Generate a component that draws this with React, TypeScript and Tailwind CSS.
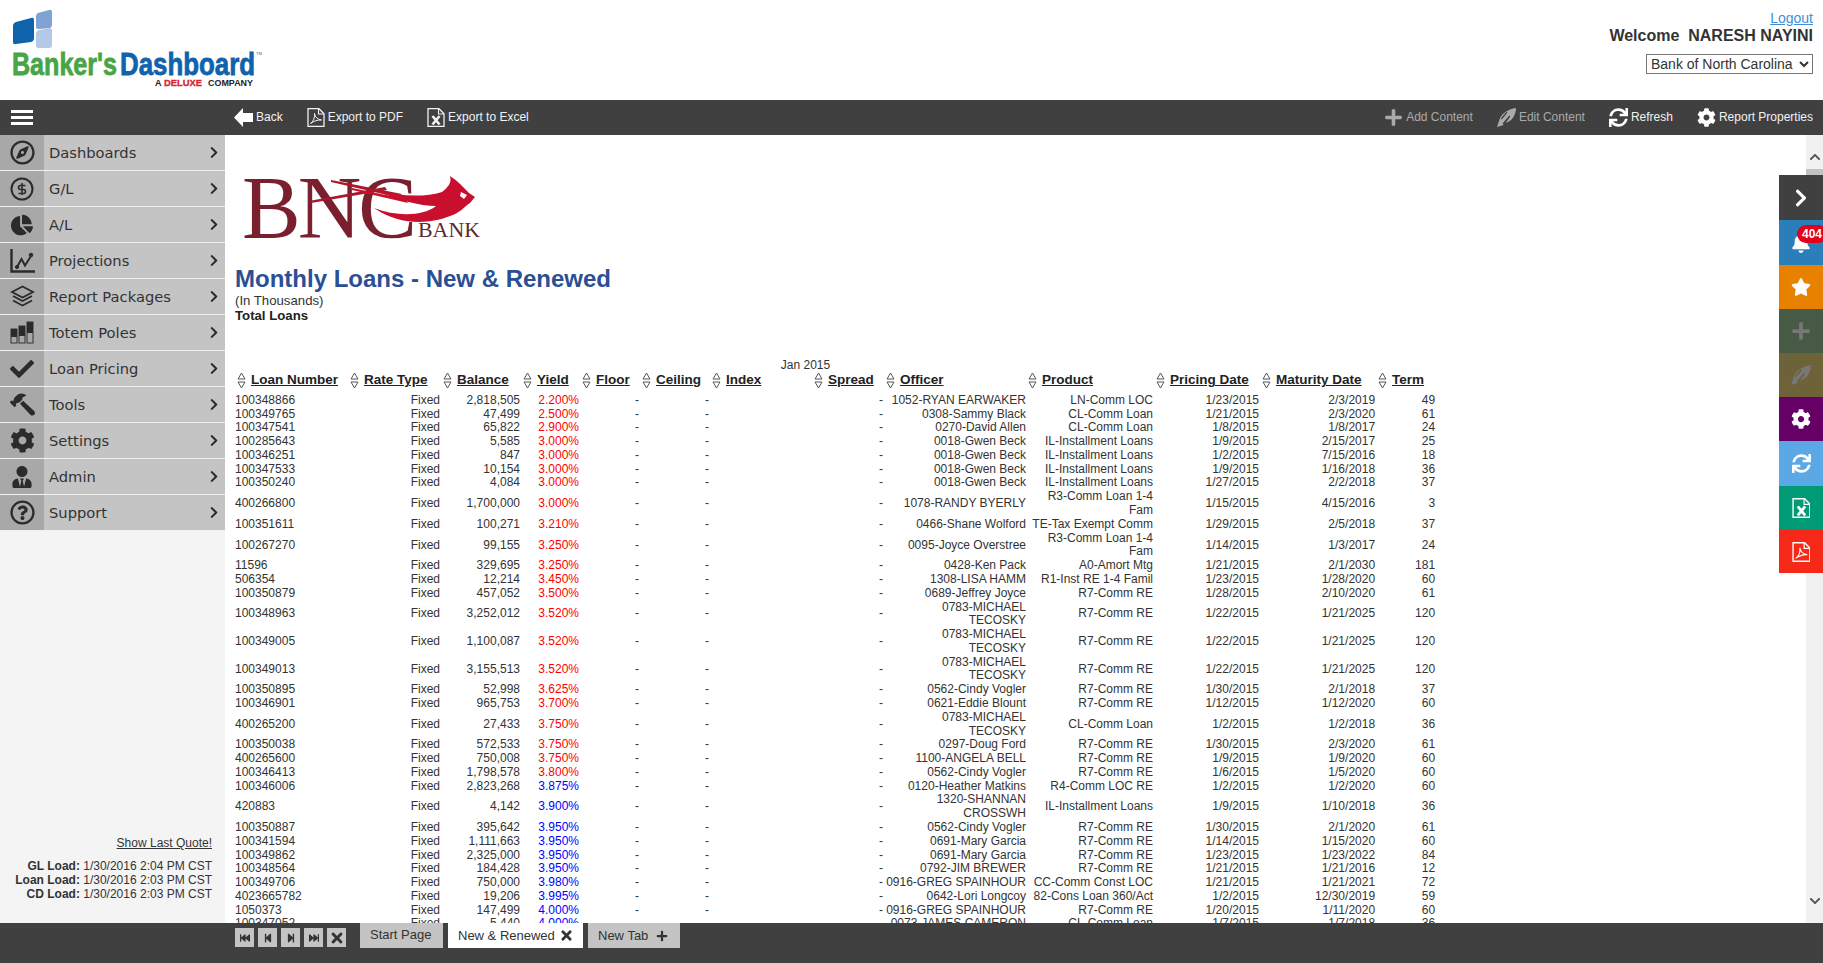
import type { ReactNode } from "react";
import {
  FaChartPie,
  FaCheck,
  FaChevronDown,
  FaChevronRight,
  FaChevronUp,
  FaCog,
  FaBell,
  FaFastBackward,
  FaFastForward,
  FaHammer,
  FaPlus,
  FaRegCompass,
  FaRegQuestionCircle,
  FaStar,
  FaStepBackward,
  FaStepForward,
  FaSync,
  FaTimes,
  FaUserTie,
} from "react-icons/fa";

const R7 = "R7-Comm RE";
const IL = "IL-Installment Loans";
const CL = "CL-Comm Loan";
const R3 = "R3-Comm Loan 1-4\nFam";
const MT = "0783-MICHAEL\nTECOSKY";

// loan, balance, yield, officer, product, pricing, maturity, term
const ROWS: string[][] = [
  ["100348866", "2,818,505", "2.200", "1052-RYAN EARWAKER", "LN-Comm LOC", "1/23/2015", "2/3/2019", "49"],
  ["100349765", "47,499", "2.500", "0308-Sammy Black", CL, "1/21/2015", "2/3/2020", "61"],
  ["100347541", "65,822", "2.900", "0270-David Allen", CL, "1/8/2015", "1/8/2017", "24"],
  ["100285643", "5,585", "3.000", "0018-Gwen Beck", IL, "1/9/2015", "2/15/2017", "25"],
  ["100346251", "847", "3.000", "0018-Gwen Beck", IL, "1/2/2015", "7/15/2016", "18"],
  ["100347533", "10,154", "3.000", "0018-Gwen Beck", IL, "1/9/2015", "1/16/2018", "36"],
  ["100350240", "4,084", "3.000", "0018-Gwen Beck", IL, "1/27/2015", "2/2/2018", "37"],
  ["400266800", "1,700,000", "3.000", "1078-RANDY BYERLY", R3, "1/15/2015", "4/15/2016", "3"],
  ["100351611", "100,271", "3.210", "0466-Shane Wolford", "TE-Tax Exempt Comm", "1/29/2015", "2/5/2018", "37"],
  ["100267270", "99,155", "3.250", "0095-Joyce Overstree", R3, "1/14/2015", "1/3/2017", "24"],
  ["11596", "329,695", "3.250", "0428-Ken Pack", "A0-Amort Mtg", "1/21/2015", "2/1/2030", "181"],
  ["506354", "12,214", "3.450", "1308-LISA HAMM", "R1-Inst RE 1-4 Famil", "1/23/2015", "1/28/2020", "60"],
  ["100350879", "457,052", "3.500", "0689-Jeffrey Joyce", R7, "1/28/2015", "2/10/2020", "61"],
  ["100348963", "3,252,012", "3.520", MT, R7, "1/22/2015", "1/21/2025", "120"],
  ["100349005", "1,100,087", "3.520", MT, R7, "1/22/2015", "1/21/2025", "120"],
  ["100349013", "3,155,513", "3.520", MT, R7, "1/22/2015", "1/21/2025", "120"],
  ["100350895", "52,998", "3.625", "0562-Cindy Vogler", R7, "1/30/2015", "2/1/2018", "37"],
  ["100346901", "965,753", "3.700", "0621-Eddie Blount", R7, "1/12/2015", "1/12/2020", "60"],
  ["400265200", "27,433", "3.750", MT, CL, "1/2/2015", "1/2/2018", "36"],
  ["100350038", "572,533", "3.750", "0297-Doug Ford", R7, "1/30/2015", "2/3/2020", "61"],
  ["400265600", "750,008", "3.750", "1100-ANGELA BELL", R7, "1/9/2015", "1/9/2020", "60"],
  ["100346413", "1,798,578", "3.800", "0562-Cindy Vogler", R7, "1/6/2015", "1/5/2020", "60"],
  ["100346006", "2,823,268", "3.875", "0120-Heather Matkins", "R4-Comm LOC RE", "1/2/2015", "1/2/2020", "60"],
  ["420883", "4,142", "3.900", "1320-SHANNAN\nCROSSWH", IL, "1/9/2015", "1/10/2018", "36"],
  ["100350887", "395,642", "3.950", "0562-Cindy Vogler", R7, "1/30/2015", "2/1/2020", "61"],
  ["100341594", "1,111,663", "3.950", "0691-Mary Garcia", R7, "1/14/2015", "1/15/2020", "60"],
  ["100349862", "2,325,000", "3.950", "0691-Mary Garcia", R7, "1/23/2015", "1/23/2022", "84"],
  ["100348564", "184,428", "3.950", "0792-JIM BREWER", R7, "1/21/2015", "1/21/2016", "12"],
  ["100349706", "750,000", "3.980", "0916-GREG SPAINHOUR", "CC-Comm Const LOC", "1/21/2015", "1/21/2021", "72"],
  ["4023665782", "19,206", "3.995", "0642-Lori Longcoy", "82-Cons Loan 360/Act", "1/2/2015", "12/30/2019", "59"],
  ["1050373", "147,499", "4.000", "0916-GREG SPAINHOUR", R7, "1/20/2015", "1/11/2020", "60"],
  ["100347052", "5,440", "4.000", "0073-JAMES CAMERON", CL, "1/7/2015", "1/7/2018", "36"],
];

const COLUMNS = [
  { label: "Loan Number", width: 113 },
  { label: "Rate Type", width: 93 },
  { label: "Balance", width: 80 },
  { label: "Yield", width: 59 },
  { label: "Floor", width: 60 },
  { label: "Ceiling", width: 70 },
  { label: "Index", width: 102 },
  { label: "Spread", width: 72 },
  { label: "Officer", width: 142 },
  { label: "Product", width: 128 },
  { label: "Pricing Date", width: 106 },
  { label: "Maturity Date", width: 116 },
  { label: "Term", width: 60 },
];

function DollarCircle() {
  return (
    <svg width="24" height="24" viewBox="0 0 24 24" fill="none" stroke="currentColor">
      <circle cx="12" cy="12" r="10.5" strokeWidth="2" />
      <path d="M15.5 8.5H10.5a2 2 0 0 0 0 4h3a2 2 0 0 1 0 4H8.5M12 6v12" strokeWidth="1.6" />
    </svg>
  );
}

function ProjectionsIcon() {
  return (
    <svg width="25" height="25" viewBox="0 0 25 25" fill="none" stroke="currentColor">
      <path d="M1.5 1v22.5H25" strokeWidth="2.4" />
      <path d="M7 19l4.5-8 3.5 6.5L21 8" strokeWidth="2" />
      <circle cx="7" cy="19" r="1.6" fill="currentColor" />
      <circle cx="21" cy="7" r="1.8" fill="currentColor" />
    </svg>
  );
}

function LayersIcon() {
  return (
    <svg width="25" height="23" viewBox="0 0 25 23" fill="none" stroke="currentColor" strokeWidth="1.8">
      <path d="M12.5 1.5L23 7l-10.5 5.5L2 7z" />
      <path d="M3 11l9.5 5L22 11" />
      <path d="M3 15.5l9.5 5 9.5-5" />
    </svg>
  );
}

function TotemIcon() {
  return (
    <svg width="24" height="24" viewBox="0 0 24 24">
      <rect x="1" y="8" width="6" height="14" fill="none" stroke="#333" />
      <rect x="1" y="8" width="6" height="8" fill="#2b2b2b" />
      <rect x="9" y="5" width="6" height="17" fill="none" stroke="#333" />
      <rect x="9" y="5" width="6" height="10" fill="#2b2b2b" />
      <rect x="17" y="1" width="6" height="21" fill="none" stroke="#333" />
      <rect x="17" y="1" width="6" height="11" fill="#2b2b2b" />
    </svg>
  );
}

const NAV: { label: string; icon: ReactNode }[] = [
  { label: "Dashboards", icon: <FaRegCompass size={25} /> },
  { label: "G/L", icon: <DollarCircle /> },
  { label: "A/L", icon: <FaChartPie size={22} /> },
  { label: "Projections", icon: <ProjectionsIcon /> },
  { label: "Report Packages", icon: <LayersIcon /> },
  { label: "Totem Poles", icon: <TotemIcon /> },
  { label: "Loan Pricing", icon: <FaCheck size={24} /> },
  { label: "Tools", icon: <FaHammer size={25} className="-scale-x-100" /> },
  { label: "Settings", icon: <FaCog size={25} /> },
  { label: "Admin", icon: <FaUserTie size={22} /> },
  { label: "Support", icon: <FaRegQuestionCircle size={25} /> },
];

function BankersLogo() {
  return (
    <svg width="270" height="100" viewBox="0 0 270 100" className="block shrink-0">
      <path d="M13 26q0-3 3-4l15-4q3-1 3 2v18q0 3-3 4l-15 2q-3 1-3-2z" fill="#0f63ad" />
      <path d="M36 16q0-2 2-3l11-3q3-1 3 2v13q0 2-2 3l-11 1q-3 0-3-2z" fill="#7fa3d4" />
      <path d="M36 33q0-2 3-3l10-2q3 0 3 2v15q0 3-3 3H39q-3 0-3-2z" fill="#b4c9e6" />
      <text x="12" y="75" textLength="105" lengthAdjust="spacingAndGlyphs" fontFamily="Liberation Sans" fontWeight="700" fontSize="32" fill="#47a547" stroke="#47a547" strokeWidth="0.8">
        Banker's
      </text>
      <text x="120" y="75" textLength="135" lengthAdjust="spacingAndGlyphs" fontFamily="Liberation Sans" fontWeight="700" fontSize="32" fill="#0f63ad" stroke="#0f63ad" strokeWidth="0.8">
        Dashboard
      </text>
      <text x="256" y="55" fontFamily="Liberation Sans" fontSize="4" fill="#0f63ad">
        TM
      </text>
      <text x="155" y="86" fontFamily="Liberation Sans" fontWeight="700" fontSize="9" fill="#222">
        A
      </text>
      <text x="164" y="86" textLength="38" lengthAdjust="spacingAndGlyphs" fontFamily="Liberation Sans" fontWeight="700" fontSize="9" fill="#d9232e" stroke="#d9232e" strokeWidth="0.3">
        DELUXE
      </text>
      <text x="208" y="86" textLength="45" lengthAdjust="spacingAndGlyphs" fontFamily="Liberation Sans" fontWeight="700" fontSize="9" fill="#222">
        COMPANY
      </text>
    </svg>
  );
}

function BncLogo() {
  return (
    <svg width="250" height="72" viewBox="235 170 250 72" className="block overflow-visible">
      <text x="242" y="237" textLength="175" lengthAdjust="spacing" fontFamily="Liberation Serif" fontSize="88" fill="#7a1f2e">
        BNC
      </text>
      <text x="418" y="237" textLength="62" lengthAdjust="spacingAndGlyphs" fontFamily="Liberation Serif" fontSize="20" fill="#5e2b30">
        BANK
      </text>
      <path d="M331 180L402 194 396 197 331 182z" fill="#a8182c" />
      <path d="M309 201L385 187 387 190 311 203z" fill="#a8182c" />
      <path d="M352 188L405 199 408 203 352 190z" fill="#c8102e" />
      <g transform="translate(2 0)">
        <path
          d="M372 190C398 196 420 198 440 192 446 187 450 183 448 176 456 181 462 188 467 193L473 197 468 203C462 207 458 213 448 216 428 224 398 226 372 208 395 217 422 216 434 206 418 206 395 200 372 190z"
          fill="#c8102e"
        />
        <path d="M459 192l6 3-3 4-4-3z" fill="#fff" />
      </g>
    </svg>
  );
}

function ArrowLeft() {
  return (
    <svg width="19" height="19" viewBox="0 0 19 19" fill="#fff">
      <path d="M0 9.5L9 0v5h10v9H9v5z" />
    </svg>
  );
}

function PenIcon({ size = 19 }: { size?: number }) {
  return (
    <svg width={size} height={size} viewBox="0 0 20 20" fill="currentColor">
      <path
        fillRule="evenodd"
        d="M0 20l3-9C5 6 12 1 20 0c0 7-4 13-9 15l-2 1 5-7-1-1-7 8 1 2zM4 11l6-7 1 1-6 7z"
      />
    </svg>
  );
}

function FileIcon({ kind, size = 19 }: { kind: "pdf" | "excel"; size?: number }) {
  return (
    <svg width={(size * 18) / 19} height={size} viewBox="0 0 18 19" fill="none" stroke="currentColor">
      <path d="M1 .7h11l5 5v12.6H1z" strokeWidth="1.3" />
      <path d="M11.5 1v5H17" strokeWidth="1.1" />
      {kind === "pdf" ? (
        <path d="M3.5 15.5c3-2 4.5-6 4-10 .5 3.5 3 6 7 6.5-4-.2-7.500 1-11 3.500z" strokeWidth="1" />
      ) : (
        <path d="M5.500 8l7 8.500M12.500 8l-7 8.500" strokeWidth="2.600" />
      )}
    </svg>
  );
}

function ToolItem({ icon, label, muted }: { icon: ReactNode; label: string; muted?: boolean }) {
  return (
    <div className={`flex items-center gap-[3px] text-[12px] ${muted ? "text-[#aaaaaa]" : "text-[#f2f2f2]"}`}>
      {icon}
      <span className="mb-[2px]">{label}</span>
    </div>
  );
}

function SortIcon() {
  return (
    <svg width="9" height="17" viewBox="0 0 9 17" fill="none" stroke="#555" className="ml-[2px] mr-[5px] shrink-0">
      <path d="M4.5 1L1 7h7z" />
      <path d="M1 10h7l-3.500 6z" />
    </svg>
  );
}

function NavButton({ children }: { children: ReactNode }) {
  return <div className="flex h-[19px] w-[19px] items-center justify-center bg-[#c4c4c4] text-[#333]">{children}</div>;
}

function SideBtn({ color, children, height }: { color: string; children: ReactNode; height: string }) {
  return <div className={`flex w-[44px] items-center justify-center ${color} ${height}`}>{children}</div>;
}

function Dash() {
  return <td className="pr-[1px] text-right align-middle">-</td>;
}

export default function App() {
  return (
    <div className="relative flex h-[963px] w-[1823px] flex-col overflow-hidden bg-white font-['Liberation_Sans',Arial,sans-serif] text-[#333]">
      <header className="flex h-[100px] shrink-0 justify-between">
        <BankersLogo />
        <div className="flex flex-col items-end pr-[10px] pt-[9px]">
          <a href="#" className="text-[14px] leading-[18px] text-[#3f8fd8] underline">
            Logout
          </a>
          <p className="whitespace-pre text-[16px] font-bold leading-[18px]">Welcome  NARESH NAYINI</p>
          <select className="mt-[9px] h-[20px] w-[167px] border border-[#767676] bg-white text-[14px] leading-[18px]">
            <option>Bank of North Carolina</option>
          </select>
        </div>
      </header>

      <div className="flex h-[35px] shrink-0 items-center justify-between bg-[#404040] pr-[10px]">
        <div className="flex items-center">
          <div className="w-[234px] pl-[11px]">
            <div className="flex w-[22px] flex-col gap-[3px]">
              <span className="h-[3px] bg-white" />
              <span className="h-[3px] bg-white" />
              <span className="h-[3px] bg-white" />
            </div>
          </div>
          <div className="flex items-center gap-[24px] text-white">
            <ToolItem icon={<ArrowLeft />} label="Back" />
            <ToolItem icon={<FileIcon kind="pdf" />} label="Export to PDF" />
            <ToolItem icon={<FileIcon kind="excel" />} label="Export to Excel" />
          </div>
        </div>
        <div className="flex items-center gap-[24px]">
          <ToolItem muted icon={<FaPlus size={19} />} label="Add Content" />
          <ToolItem muted icon={<PenIcon />} label="Edit Content" />
          <ToolItem icon={<FaSync size={19} color="#fff" />} label="Refresh" />
          <ToolItem icon={<FaCog size={19} color="#fff" />} label="Report Properties" />
        </div>
      </div>

      <div className="relative flex min-h-0 flex-1">
        <aside className="flex w-[225px] shrink-0 flex-col bg-[#f4f4f4]">
          {NAV.map((item) => (
            <div key={item.label} className="flex h-[36px] border-b border-[#f0f0f0] bg-[#c4c4c4] text-[#333]">
              <div className="flex w-[44px] items-center justify-center bg-[#a8a8a8] text-[#2b2b2b]">{item.icon}</div>
              <span className="flex-1 pl-[5px] font-['DejaVu_Sans',sans-serif] text-[14.7px] leading-[36px]">{item.label}</span>
              <div className="mr-[5px] flex w-[12px] items-center text-[#2b2b2b]">
                <FaChevronRight size={13} />
              </div>
            </div>
          ))}
          <div className="mt-auto pb-[22px] pr-[13px] text-right text-[12px] leading-[14px]">
            <a href="#" className="underline">
              Show Last Quote!
            </a>
            <p className="mt-[9px]">
              <b>GL Load:</b> 1/30/2016 2:04 PM CST
            </p>
            <p>
              <b>Loan Load:</b> 1/30/2016 2:03 PM CST
            </p>
            <p>
              <b>CD Load:</b> 1/30/2016 2:03 PM CST
            </p>
          </div>
        </aside>

        <main className="min-w-0 flex-1 overflow-hidden pl-[10px] pt-[35px]">
          <BncLogo />
          <h1 className="mt-[22px] text-[24px] font-bold leading-[29px] text-[#2a4f94]">Monthly Loans - New &amp; Renewed</h1>
          <p className="text-[13.2px] leading-[15px]">(In Thousands)</p>
          <p className="text-[13.2px] font-bold leading-[15px] text-[#222]">Total Loans</p>

          <table className="mt-[34.8px] w-[1201px] table-fixed border-collapse text-[12px] leading-[13.78px]">
            <colgroup>
              {COLUMNS.map((col) => (
                <col key={col.label} style={{ width: col.width }} />
              ))}
            </colgroup>
            <thead>
              <tr>
                <td colSpan={12} className="h-[14px] text-center leading-[14px]">
                  Jan 2015
                </td>
                <td />
              </tr>
              <tr>
                {COLUMNS.map((col) => (
                  <th key={col.label} className="pb-[5px] text-left align-top font-bold">
                    <div className="flex h-[17px] items-center text-[13.5px] text-[#222]">
                      <SortIcon />
                      <span className="underline whitespace-nowrap">{col.label}</span>
                    </div>
                  </th>
                ))}
              </tr>
            </thead>
            <tbody>
              {ROWS.map((row) => {
                const rate = parseFloat(row[2]);
                return (
                  <tr key={row[0]}>
                    <td className="align-middle">{row[0]}</td>
                    <td className="pr-[1px] text-right align-middle">Fixed</td>
                    <td className="pr-[1px] text-right align-middle">{row[1]}</td>
                    <td className={`pr-[1px] text-right align-middle ${rate < 3.85 ? "text-[#ff0000]" : "text-[#0000ff]"}`}>{row[2]}%</td>
                    <Dash />
                    <Dash />
                    <td />
                    <Dash />
                    <td className="whitespace-pre-line text-right align-middle">{row[3]}</td>
                    <td className="whitespace-pre-line pr-[1px] text-right align-middle">{row[4]}</td>
                    <td className="pr-[1px] text-right align-middle">{row[5]}</td>
                    <td className="pr-[1px] text-right align-middle">{row[6]}</td>
                    <td className="pr-[1px] text-right align-middle">{row[7]}</td>
                  </tr>
                );
              })}
            </tbody>
          </table>
        </main>

        <div className="flex w-[17px] shrink-0 flex-col items-center bg-[#f1f1f1] text-[#555]">
          <div className="flex h-[34px] shrink-0 items-end pb-[6px]">
            <FaChevronUp size={12} />
          </div>
          <div className="h-[140px] w-full bg-[#c1c1c1]" />
          <div className="mt-auto pb-[16px]">
            <FaChevronDown size={12} />
          </div>
        </div>

        <div className="absolute right-0 top-[40px] flex flex-col text-white">
          <SideBtn color="bg-[#404040]" height="h-[45px]">
            <FaChevronRight size={20} />
          </SideBtn>
          <SideBtn color="bg-[#2a7fba]" height="h-[45px]">
            <FaBell size={20} />
          </SideBtn>
          <SideBtn color="bg-[#e88000]" height="h-[44px]">
            <FaStar size={20} />
          </SideBtn>
          <SideBtn color="bg-[#465a46]" height="h-[44px]">
            <span className="text-[#777777]">
              <FaPlus size={20} />
            </span>
          </SideBtn>
          <SideBtn color="bg-[#6e6238]" height="h-[44px]">
            <span className="text-[#777777]">
              <PenIcon size={20} />
            </span>
          </SideBtn>
          <SideBtn color="bg-[#660066]" height="h-[44px]">
            <FaCog size={20} />
          </SideBtn>
          <SideBtn color="bg-[#5aa9e6]" height="h-[45px]">
            <FaSync size={19} />
          </SideBtn>
          <SideBtn color="bg-[#009a76]" height="h-[44px]">
            <FileIcon kind="excel" size={20} />
          </SideBtn>
          <SideBtn color="bg-[#f62817]" height="h-[43px]">
            <FileIcon kind="pdf" size={20} />
          </SideBtn>
          <span className="absolute left-[18px] top-[50px] rounded-l-[9px] rounded-r-[9px] bg-[#e2001a] px-[5px] text-[12px] font-bold leading-[18px]">
            404
          </span>
        </div>
      </div>

      <footer className="flex h-[40px] shrink-0 items-start bg-[#404040] pl-[235px]">
        <div className="mt-[5px] flex gap-[4px]">
          <NavButton>
            <FaFastBackward size={10} />
          </NavButton>
          <NavButton>
            <FaStepBackward size={10} />
          </NavButton>
          <NavButton>
            <FaStepForward size={10} />
          </NavButton>
          <NavButton>
            <FaFastForward size={10} />
          </NavButton>
          <NavButton>
            <FaTimes size={16} />
          </NavButton>
        </div>
        <div className="ml-[14px] flex h-[25px] gap-[5px] text-[13px] leading-[24px]">
          <div className="w-[83px] bg-[#c4c4c4] pl-[10px]">Start Page</div>
          <div className="flex w-[135px] items-center gap-[4px] bg-white pl-[10px]">
            New &amp; Renewed <FaTimes size={15} />
          </div>
          <div className="flex w-[92px] items-center gap-[8px] bg-[#c4c4c4] pl-[10px]">
            New Tab <FaPlus size={12} />
          </div>
        </div>
      </footer>
    </div>
  );
}
